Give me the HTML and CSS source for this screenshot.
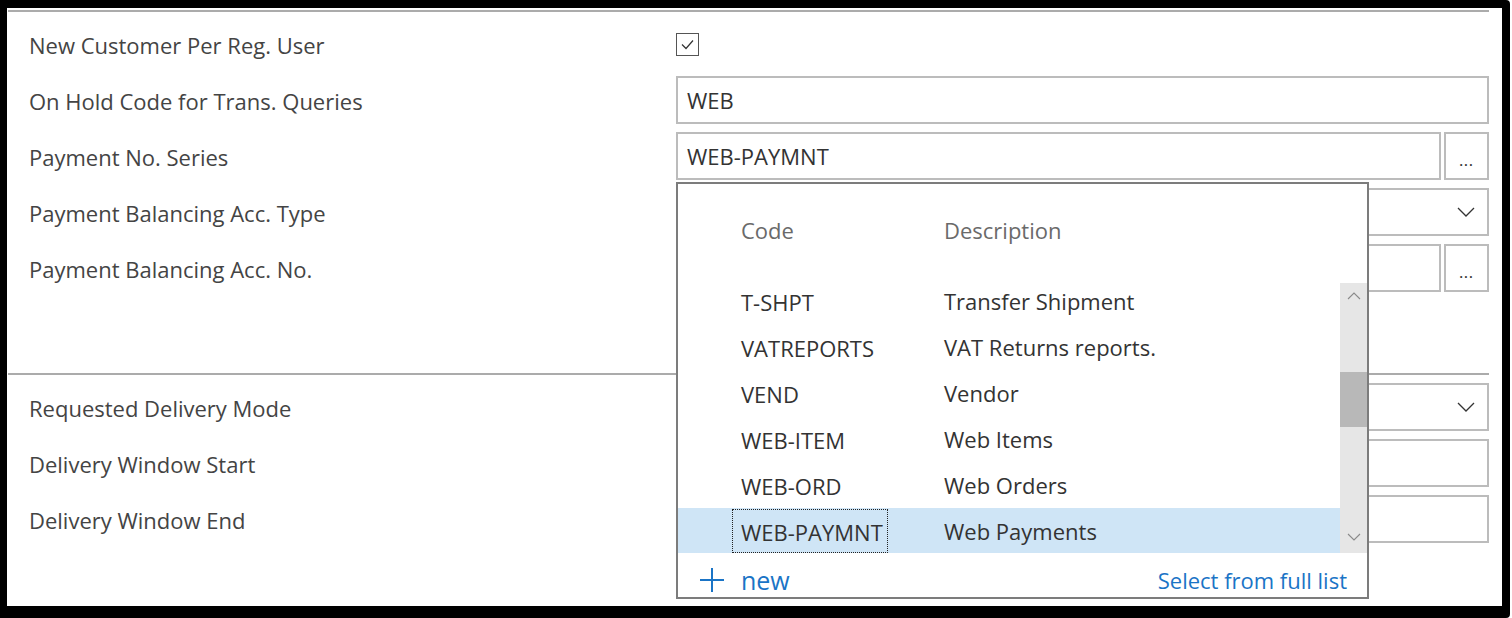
FILE: index.html
```html
<!DOCTYPE html>
<html>
<head>
<meta charset="utf-8">
<link rel="stylesheet" href="styles.css">
</head>
<body>
<div class="frame">
  <div class="rule top"></div>
  <div class="section first">
    <div class="row">
      <div class="label">New Customer Per Reg. User</div>
      <div class="ctl">
        <span class="check"><svg width="21" height="21" viewBox="0 0 21 21"><polyline points="5,10.5 9,14.5 16,6.5" fill="none" stroke="#333" stroke-width="1.2"/></svg></span>
      </div>
    </div>
    <div class="row">
      <div class="label">On Hold Code for Trans. Queries</div>
      <div class="ctl"><div class="input full">WEB</div></div>
    </div>
    <div class="row">
      <div class="label">Payment No. Series</div>
      <div class="ctl"><div class="input short">WEB-PAYMNT</div><div class="btn">...</div></div>
    </div>
    <div class="row">
      <div class="label">Payment Balancing Acc. Type</div>
      <div class="ctl"><div class="input full select"><svg width="18" height="10" viewBox="0 0 18 10"><polyline points="1,1 9,9 17,1" fill="none" stroke="#333" stroke-width="1.3"/></svg></div></div>
    </div>
    <div class="row">
      <div class="label">Payment Balancing Acc. No.</div>
      <div class="ctl"><div class="input short"></div><div class="btn">...</div></div>
    </div>
  </div>
  <div class="rule sep"></div>
  <div class="section second">
    <div class="row">
      <div class="label">Requested Delivery Mode</div>
      <div class="ctl"><div class="input full select"><svg width="18" height="10" viewBox="0 0 18 10"><polyline points="1,1 9,9 17,1" fill="none" stroke="#333" stroke-width="1.3"/></svg></div></div>
    </div>
    <div class="row">
      <div class="label">Delivery Window Start</div>
      <div class="ctl"><div class="input full"></div></div>
    </div>
    <div class="row">
      <div class="label">Delivery Window End</div>
      <div class="ctl"><div class="input full"></div></div>
    </div>
  </div>

  <div class="popup">
    <div class="phead">
      <div class="hc">Code</div>
      <div class="hd">Description</div>
    </div>
    <div class="list">
      <div class="rows">
        <div class="r"><div class="c"><span>T-SHPT</span></div><div class="d">Transfer Shipment</div></div>
        <div class="r"><div class="c"><span>VATREPORTS</span></div><div class="d">VAT Returns reports.</div></div>
        <div class="r"><div class="c"><span>VEND</span></div><div class="d">Vendor</div></div>
        <div class="r"><div class="c"><span>WEB-ITEM</span></div><div class="d">Web Items</div></div>
        <div class="r"><div class="c"><span>WEB-ORD</span></div><div class="d">Web Orders</div></div>
        <div class="r sel"><div class="c"><span class="focus">WEB-PAYMNT</span></div><div class="d">Web Payments</div></div>
      </div>
      <div class="scroll">
        <svg class="up" width="14" height="8" viewBox="0 0 14 8"><polyline points="1,7 7,1 13,7" fill="none" stroke="#8a8a8a" stroke-width="1.1"/></svg>
        <div class="thumb"></div>
        <svg class="down" width="14" height="8" viewBox="0 0 14 8"><polyline points="1,1 7,7 13,1" fill="none" stroke="#8a8a8a" stroke-width="1.1"/></svg>
      </div>
    </div>
    <div class="pfoot">
      <div class="new"><svg width="24" height="24" viewBox="0 0 24 24"><path d="M12 0V24M0 12H24" stroke="#1a74c6" stroke-width="2"/></svg><span>new</span></div>
      <div class="full-list">Select from full list</div>
    </div>
  </div>
</div>
</body>
</html>
```
FILE: styles.css
```css
* { box-sizing: border-box; }
html, body { margin: 0; padding: 0; background: #fff; }
body {
  font-family: "Open Sans", "Noto Sans", sans-serif;
  font-size: 22px;
  color: #444;
  width: 1512px;
  height: 618px;
  overflow: hidden;
}
.frame {
  position: relative;
  width: 1510px;
  height: 618px;
  border-style: solid;
  border-color: #000;
  border-width: 8px 8px 12px 7px;
  border-radius: 0 4px 4px 0;
  background: #fff;
}
.rule {
  height: 2px;
  background: #ababab;
  margin-left: 1px;
  width: 1481px;
}
.rule.top { margin-top: 2px; }
.rule.sep { margin-top: 81px; }
.section {
  display: flex;
  flex-direction: column;
  gap: 8px;
  padding: 8px 0 0 22px;
}
.row {
  display: flex;
  align-items: center;
  height: 48px;
}
.label {
  width: 647px;
  line-height: 30px;
  padding-top: 2px;
  white-space: nowrap;
}
.ctl {
  width: 813px;
  height: 48px;
  display: flex;
  align-items: center;
  gap: 3px;
}
.check {
  width: 23px;
  height: 23px;
  border: 1px solid #555;
  display: flex;
  align-items: center;
  justify-content: center;
}
.input {
  height: 48px;
  border: 2px solid #bcbcbc;
  padding: 0 9px;
  display: flex;
  align-items: center;
  color: #333;
  white-space: nowrap;
}
.input.full { width: 813px; }
.input.short { width: 765px; }
.input.select { justify-content: flex-end; padding-right: 12px; }
.btn {
  width: 45px;
  height: 48px;
  border: 2px solid #bcbcbc;
  display: flex;
  align-items: center;
  justify-content: center;
  padding-top: 8px;
  font-size: 14px;
  font-weight: 600;
  letter-spacing: 1px;
  color: #333;
}

/* popup */
.popup {
  position: absolute;
  left: 669px;
  top: 174px;
  width: 693px;
  height: 417px;
  border: 2px solid #7c7c7c;
  background: #fff;
  display: flex;
  flex-direction: column;
}
.phead {
  height: 99px;
  padding: 31px 0 0 63px;
  display: flex;
  line-height: 30px;
  color: #6a6a6a;
}
.hc { width: 203px; }
.list {
  position: relative;
  height: 270px;
  overflow: hidden;
}
.rows { margin-top: -5px; }
.r {
  height: 46px;
  display: flex;
  align-items: center;
  padding-left: 54px;
  color: #333;
  white-space: nowrap;
}
.r.sel { background: #cfe5f6; }
.c { width: 212px; }
.c span {
  display: inline-block;
  height: 44px;
  line-height: 44px;
  padding-left: 8px;
  border: 1px solid transparent;
}
.c span.focus { border: 1px dotted #222; padding-right: 4px; }
.scroll {
  position: absolute;
  right: 0;
  top: 0;
  width: 27px;
  height: 100%;
  background: #e6e6e6;
}
.scroll .up { position: absolute; left: 7px; top: 9px; }
.scroll .down { position: absolute; left: 7px; bottom: 12px; }
.thumb {
  position: absolute;
  left: 0;
  top: 89px;
  width: 27px;
  height: 55px;
  background: #b8b8b8;
}
.pfoot {
  height: 44px;
  display: flex;
  align-items: center;
  justify-content: space-between;
  padding: 10px 20px 0 22px;
  color: #1a74c6;
}
.new { display: flex; align-items: center; gap: 17px; }
.new span { line-height: 30px; font-size: 25px; }
.full-list { line-height: 30px; }
```
